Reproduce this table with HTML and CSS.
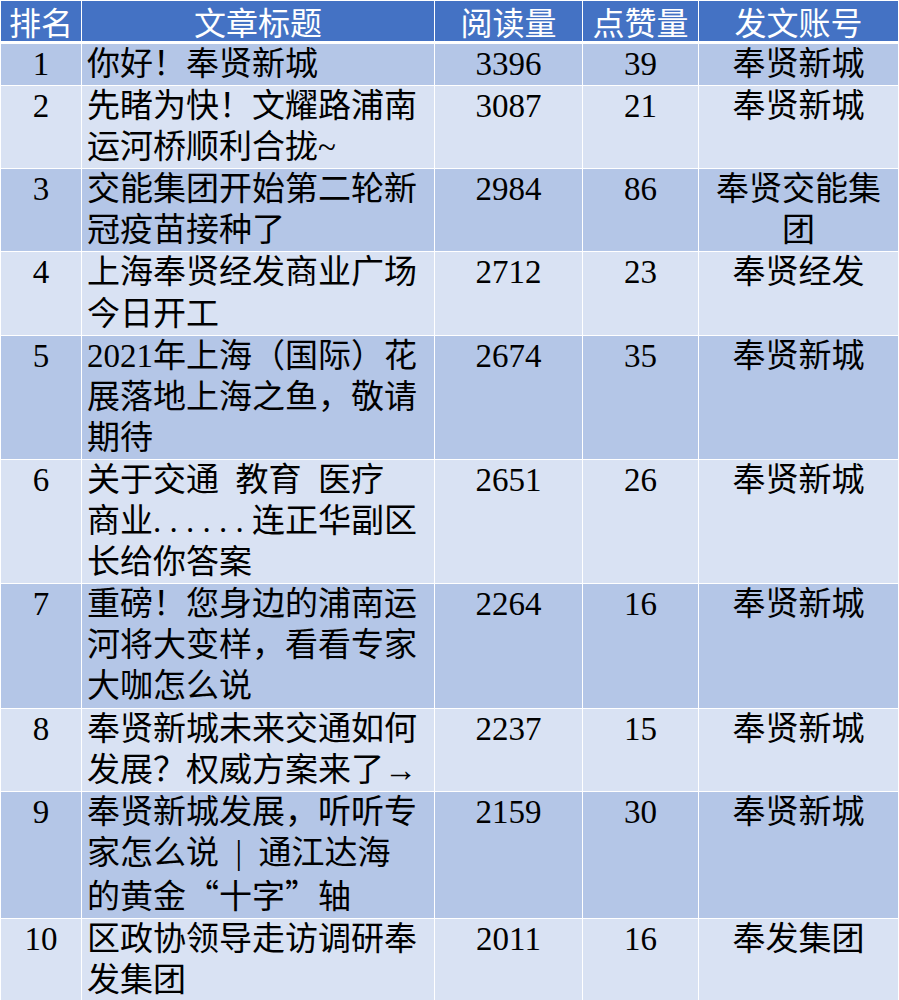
FILE: index.html
```html
<!DOCTYPE html>
<html lang="zh-CN">
<head>
<meta charset="utf-8">
<title>文章排名</title>
<link rel="stylesheet" href="styles.css">
</head>
<body>
<table class="rank-table">
  <colgroup>
    <col class="c-rank">
    <col class="c-title">
    <col class="c-read">
    <col class="c-like">
    <col class="c-acct">
  </colgroup>
  <thead>
    <tr>
      <th>排名</th>
      <th>文章标题</th>
      <th>阅读量</th>
      <th>点赞量</th>
      <th>发文账号</th>
    </tr>
  </thead>
  <tbody>
    <tr>
      <td class="num">1</td>
      <td class="title">你好！奉贤新城</td>
      <td class="num">3396</td>
      <td class="num">39</td>
      <td class="acct">奉贤新城</td>
    </tr>
    <tr>
      <td class="num">2</td>
      <td class="title">先睹为快！文耀路浦南<br>运河桥顺利合拢~</td>
      <td class="num">3087</td>
      <td class="num">21</td>
      <td class="acct">奉贤新城</td>
    </tr>
    <tr>
      <td class="num">3</td>
      <td class="title">交能集团开始第二轮新<br>冠疫苗接种了</td>
      <td class="num">2984</td>
      <td class="num">86</td>
      <td class="acct">奉贤交能集团</td>
    </tr>
    <tr>
      <td class="num">4</td>
      <td class="title">上海奉贤经发商业广场<br>今日开工</td>
      <td class="num">2712</td>
      <td class="num">23</td>
      <td class="acct">奉贤经发</td>
    </tr>
    <tr>
      <td class="num">5</td>
      <td class="title">2021年上海（国际）花<br>展落地上海之鱼，敬请<br>期待</td>
      <td class="num">2674</td>
      <td class="num">35</td>
      <td class="acct">奉贤新城</td>
    </tr>
    <tr>
      <td class="num">6</td>
      <td class="title">关于交通 教育 医疗<br>商业<span class="dots">......</span>连正华副区<br>长给你答案</td>
      <td class="num">2651</td>
      <td class="num">26</td>
      <td class="acct">奉贤新城</td>
    </tr>
    <tr>
      <td class="num">7</td>
      <td class="title">重磅！您身边的浦南运<br>河将大变样，看看专家<br>大咖怎么说</td>
      <td class="num">2264</td>
      <td class="num">16</td>
      <td class="acct">奉贤新城</td>
    </tr>
    <tr>
      <td class="num">8</td>
      <td class="title">奉贤新城未来交通如何<br>发展？权威方案来了→</td>
      <td class="num">2237</td>
      <td class="num">15</td>
      <td class="acct">奉贤新城</td>
    </tr>
    <tr>
      <td class="num">9</td>
      <td class="title">奉贤新城发展，听听专<br>家怎么说 | 通江达海<br>的黄金<span class="cjk">“</span>十字<span class="cjk">”</span>轴</td>
      <td class="num">2159</td>
      <td class="num">30</td>
      <td class="acct">奉贤新城</td>
    </tr>
    <tr>
      <td class="num">10</td>
      <td class="title">区政协领导走访调研奉<br>发集团</td>
      <td class="num">2011</td>
      <td class="num">16</td>
      <td class="acct">奉发集团</td>
    </tr>
  </tbody>
</table>
</body>
</html>
```

FILE: styles.css
```css
html, body {
  margin: 0;
  padding: 0;
  overflow: hidden;
  background: #ffffff;
}

.rank-table {
  table-layout: fixed;
  width: 899px;
  border-collapse: separate;
  border-spacing: 1px;
  background: #ffffff;
  font-family: "Liberation Serif", "Noto Sans CJK SC", serif;
  font-size: 33px;
  color: #000000;
}

.c-rank { width: 80px; }
.c-title { width: 352px; }
.c-read { width: 147px; }
.c-like { width: 115px; }
.c-acct { width: 199px; }

.rank-table th {
  background: #4472c4;
  color: #ffffff;
  font-family: "Noto Sans CJK SC", sans-serif;
  font-weight: 400;
  font-size: 32px;
  height: 40px;
  line-height: 40px;
  padding: 0;
  text-align: center;
  vertical-align: middle;
  border-bottom: 2px solid #ffffff;
  white-space: nowrap;
}

.rank-table td {
  padding: 0 4px;
  line-height: 41.1px;
  vertical-align: top;
  text-align: center;
}

.rank-table tbody tr:nth-child(odd) td { background: #b4c6e7; }
.rank-table tbody tr:nth-child(even) td { background: #d9e2f3; }

.rank-table td.title {
  text-align: left;
  padding-left: 5px;
  padding-right: 6px;
  word-spacing: 0.25em;
  white-space: nowrap;
}

.dots {
  letter-spacing: 0.25em;
}

.cjk {
  font-family: "Noto Sans CJK SC", sans-serif;
}
```
